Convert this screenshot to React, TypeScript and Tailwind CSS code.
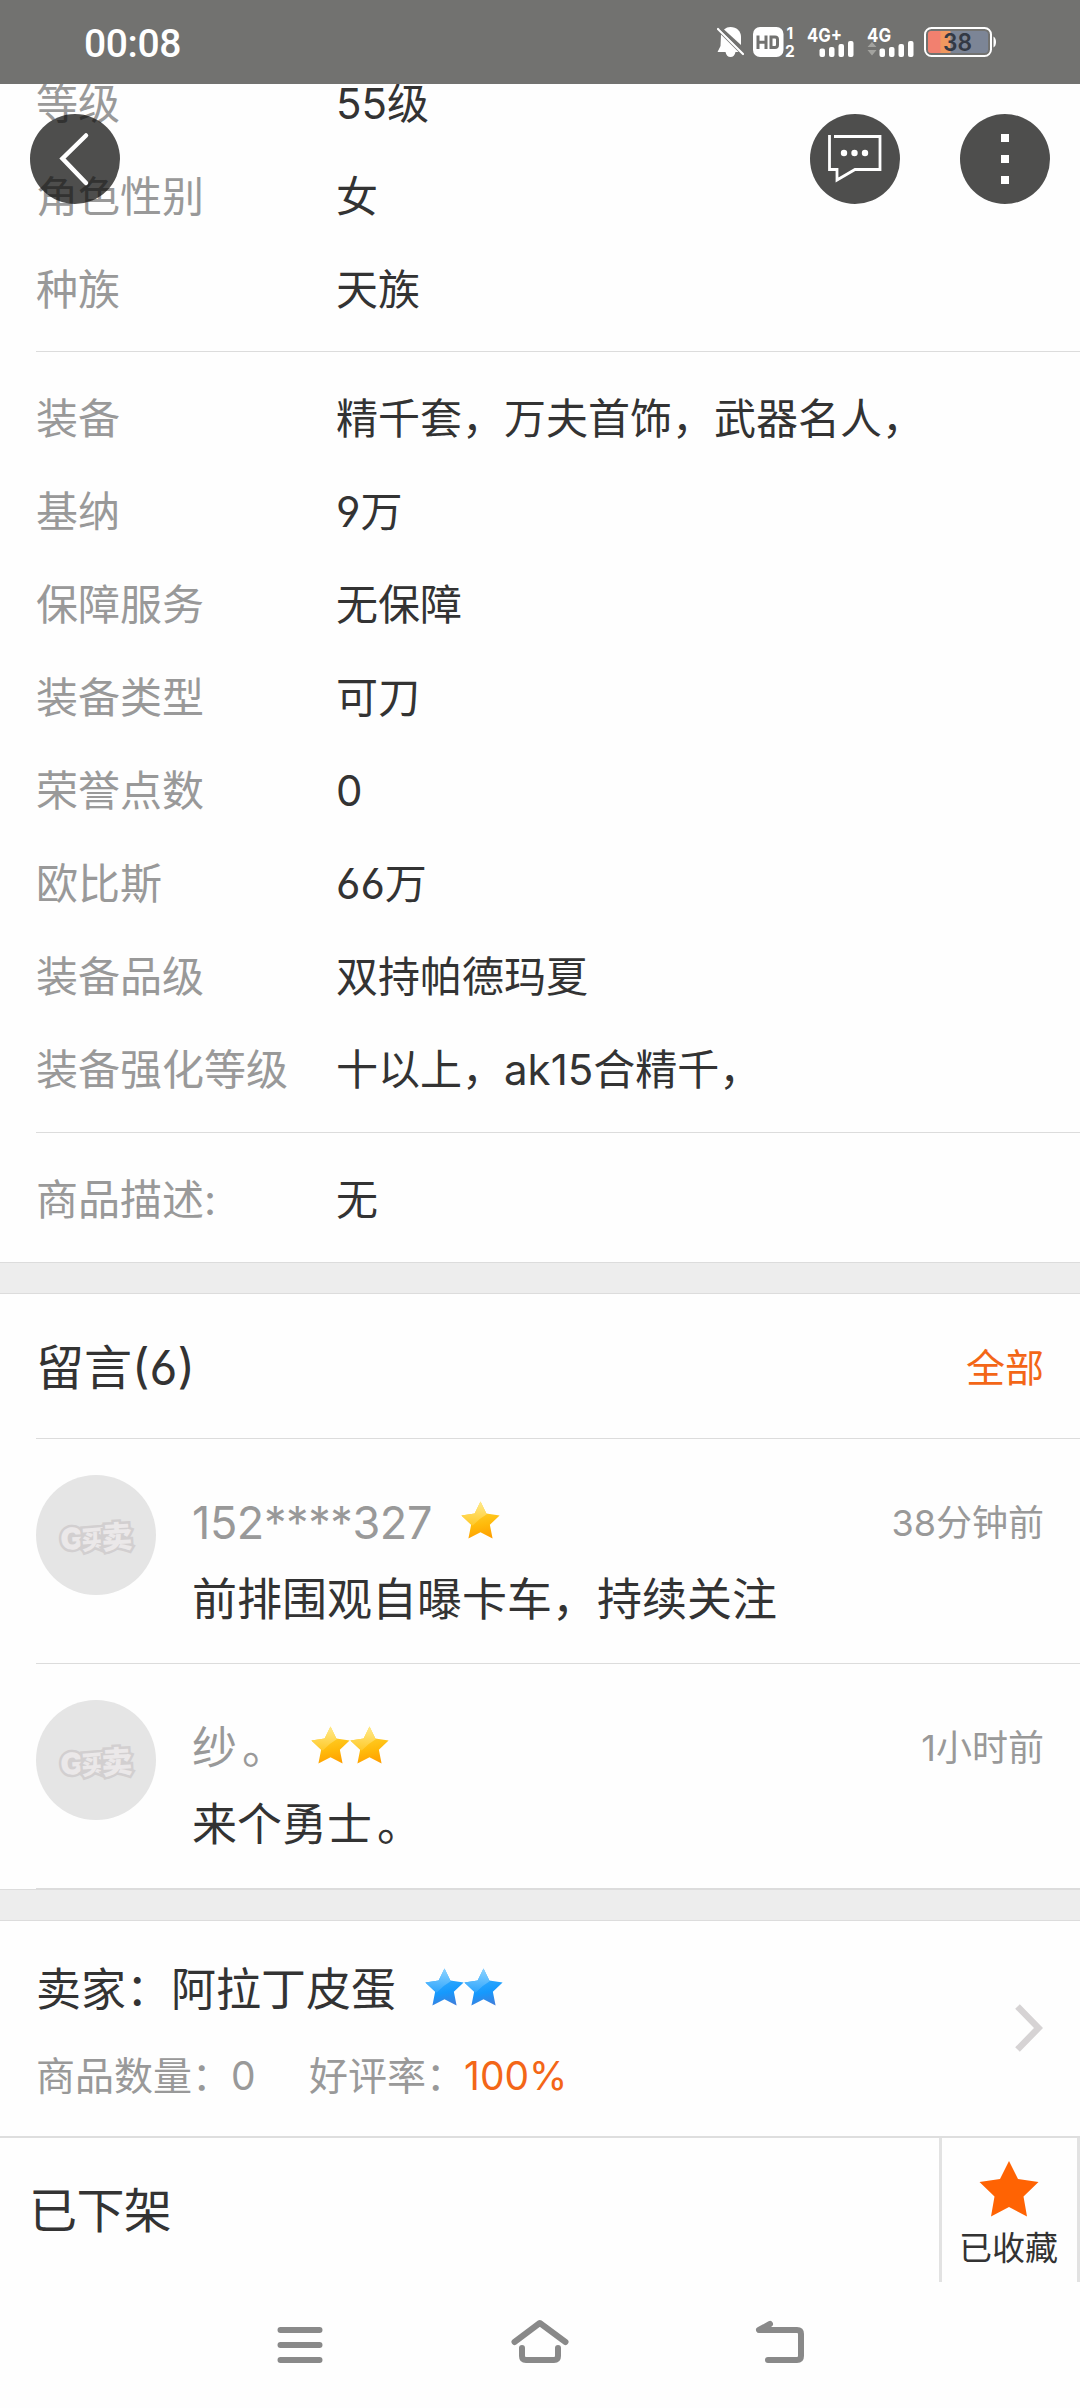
import type { ReactNode } from 'react';

const STAR = 'M50 1 L65 32 L99 37 L74 61 L81 96 L50 80 L19 96 L26 61 L1 37 L35 32 Z';

function Star({ tone }: { tone: 'gold' | 'blue' }) {
  const gold = tone === 'gold';
  return (
    <svg className="mb-[5px] h-[39px] w-[39px]" viewBox="0 0 100 100">
      <defs>
        <linearGradient id={`fill-${tone}`} x1="0.4" y1="0" x2="0.6" y2="1">
          <stop offset="0.2" stopColor={gold ? '#ffd22e' : '#35adff'} />
          <stop offset="0.65" stopColor={gold ? '#ffb90a' : '#1599fd'} />
          <stop offset="1" stopColor={gold ? '#ff9f00' : '#3f7fdc'} />
        </linearGradient>
        <linearGradient id={`shine-${tone}`} x1="0.5" y1="0" x2="0.4" y2="1">
          <stop offset="0" stopColor={gold ? '#ffe98a' : '#8ad2ff'} />
          <stop offset="1" stopColor={gold ? '#ffc928' : '#2ea5fd'} />
        </linearGradient>
      </defs>
      <path d={STAR} fill={`url(#fill-${tone})`} />
      <path d="M50 1 L65 32 L66 34 Q48 44 30 63 L26 60 L1 37 L35 32 Z" fill={`url(#shine-${tone})`} />
    </svg>
  );
}

function Row({ label, value }: { label: string; value: string }) {
  return (
    <div className="flex h-[93px] items-center pl-9 text-[42px] leading-[60px] whitespace-nowrap">
      <span className="w-[300px] text-[#999999]">{label}</span>
      <span className="text-[#333333]">{value}</span>
    </div>
  );
}

function Divider() {
  return <div className="ml-9 h-px bg-[#dcdcdc]" />;
}

function Avatar() {
  return (
    <div className="flex size-[120px] shrink-0 items-center justify-center rounded-full bg-[#e5e5e5]">
      <svg className="h-[46px] w-[80px] overflow-visible" viewBox="0 0 80 46">
        <g
          fill="#ebe8e9"
          stroke="#d2cfd0"
          strokeWidth="5"
          strokeLinejoin="miter"
          paintOrder="stroke"
          fontWeight="900"
          fontFamily="Inter, 'Noto Sans CJK SC', sans-serif"
        >
          <text x="5" y="38" fontSize="30" transform="rotate(-3 5 38)">G</text>
          <text x="26" y="38" fontSize="26" transform="rotate(-5 26 38)">买</text>
          <text x="46" y="37" fontSize="31" transform="rotate(-3 46 37)">卖</text>
        </g>
      </svg>
    </div>
  );
}

function Sentence({ text }: { text: string }) {
  if (!text.endsWith('。')) return <>{text}</>;
  return (
    <>
      {text.slice(0, -1)}
      <span className="pl-[5px]">。</span>
    </>
  );
}

function Comment({ name, stars, time, text, nameWidth }: { name: string; stars: number; time: string; text: string; nameWidth: string }) {
  return (
    <div className="flex h-[224px] px-9 pt-9">
      <Avatar />
      <div className="ml-9 flex grow flex-col pt-[14px]">
        <div className="flex h-[68px] items-center">
          <span className={`${nameWidth} text-[45px] leading-[68px] whitespace-nowrap text-[#999999]`}><Sentence text={name} /></span>
          <span className="flex">
            {Array.from({ length: stars }, (_, i) => (
              <Star key={i} tone="gold" />
            ))}
          </span>
          <span className="ml-auto text-[36px] leading-[54px] whitespace-nowrap text-[#999999]">{time}</span>
        </div>
        <p className="mt-[9px] text-[45px] leading-[68px] text-[#333333]"><Sentence text={text} /></p>
      </div>
    </div>
  );
}

function Signal({ label, arrows }: { label: string; arrows?: boolean }) {
  return (
    <svg className="h-[30px] w-[47px] overflow-visible" viewBox="0 0 47 30" fill="#fff">
      <text x="0" y="14.5" fontSize="19" fontWeight="700" fontFamily="Inter, sans-serif" textLength={label.length > 2 ? 35 : 24} lengthAdjust="spacingAndGlyphs">
        {label}
      </text>
      {arrows && <path d="M0.5 20 L5 15 L9.500 20 Z M0.500 23 L9.500 23 L5 28.500 Z" fill="#a3a39f" />}
      <rect x="12.500" y="21.500" width="5.500" height="8.500" rx="2" />
      <rect x="22" y="20" width="5.500" height="10" rx="2" />
      <rect x="31.500" y="17" width="5.500" height="13" rx="2" />
      <rect x="41" y="14" width="5.500" height="16" rx="2" />
    </svg>
  );
}

function StatusBar() {
  return (
    <header className="relative z-10 flex h-[84px] shrink-0 bg-[#727270] pr-[84px] pl-[84px] text-white">
      <span className="pt-[20px] font-[Roboto] text-[39px] leading-[48px] font-medium tracking-[-0.4px]">00:08</span>
      <div className="ml-auto flex pt-[27px]">
        <svg className="h-[30px] w-[27px]" viewBox="0 0 27 30" fill="#fff">
          <path d="M13.500 0 C19.500 0 24 4 24 10 V18 L7 2.500 C9 0.800 11 0 13.500 0 Z" />
          <path d="M4 7.500 L21.500 25 H18.500 Q17.500 30 13.500 30 Q9.500 30 8.500 25 H0.500 L3.500 19 Z" />
          <path d="M1 2 L26 27" stroke="#fff" strokeWidth="2.200" strokeLinecap="round" />
          <path d="M3 1.500 L27 24.500" stroke="#727270" strokeWidth="1.400" />
        </svg>
        <svg className="ml-[9px] h-[30px] w-[43px] overflow-visible" viewBox="0 0 43 30" fill="#fff">
          <rect width="30.500" height="30" rx="7" />
          <path d="M5 8.500 V22 M13 8.500 V22 M5 15.200 H13 M18 10 V20.500 H22 Q24.500 20.500 24.500 18 V12.500 Q24.500 10 22 10 Z" stroke="#727270" strokeWidth="3" fill="none" />
          <text x="33.500" y="11.500" fontSize="15.500" fontWeight="700" fontFamily="Inter, sans-serif">1</text>
          <text x="32" y="29.500" fontSize="15.500" fontWeight="700" fontFamily="Inter, sans-serif">2</text>
        </svg>
        <div className="ml-[11px] flex gap-[13px]">
          <Signal label="4G+" />
          <Signal label="4G" arrows />
        </div>
        <svg className="ml-[10px] h-[30px] w-[72px]" viewBox="0 0 72 30">
          <rect x="1" y="1" width="66" height="28" rx="6.500" fill="none" stroke="#fff" strokeWidth="2" />
          <path d="M69.500 9.500 Q72 11 72 15 Q72 19 69.500 20.500 Z" fill="#fff" />
          <rect x="4" y="4" width="60" height="22" rx="3.500" fill="#7c8596" />
          <path d="M7 4 H17 V26 H7 Q4 26 4 23 V7 Q4 4 7 4 Z" fill="#f2806f" />
          <rect x="16.500" y="4" width="10" height="22" fill="#f0985f" />
          <text x="19" y="23.500" fontSize="24" fontWeight="600" fontFamily="Inter, sans-serif" fill="#333944" textLength="29" lengthAdjust="spacingAndGlyphs">38</text>
        </svg>
      </div>
    </header>
  );
}

function RoundButton({ children, label }: { children: ReactNode; label: string }) {
  return (
    <button aria-label={label} className="flex size-[90px] items-center justify-center rounded-full bg-[#0a0a08]/72">
      {children}
    </button>
  );
}

function FloatingActions() {
  return (
    <div className="absolute inset-x-0 top-[114px] z-20 flex items-center px-[30px]">
      <RoundButton label="back">
        <svg className="size-[90px]" viewBox="0 0 90 90" fill="none" stroke="#fff" strokeWidth="4.500">
          <path d="M56 21.500 L32.500 44.500 L56 69" strokeLinecap="round" />
        </svg>
      </RoundButton>
      <div className="ml-auto flex gap-[60px]">
        <RoundButton label="messages">
          <svg className="size-[90px]" viewBox="0 0 90 90" fill="none" stroke="#fff" strokeWidth="2.800">
            <path d="M19.500 21 V55.500 H27 V66 L45 55.500 H70 V22.500 H24" />
            <g fill="#fff" stroke="none">
              <circle cx="34" cy="39" r="3.200" />
              <circle cx="44.500" cy="39" r="3.200" />
              <circle cx="55" cy="39" r="3.200" />
            </g>
          </svg>
        </RoundButton>
        <RoundButton label="more">
          <span className="flex flex-col gap-[13px]">
            <i className="size-2 bg-white" />
            <i className="size-2 bg-white" />
            <i className="size-2 bg-white" />
          </span>
        </RoundButton>
      </div>
    </div>
  );
}

const basics = [
  ['等级', '55级'],
  ['角色性别', '女'],
  ['种族', '天族'],
];

const gear = [
  ['装备', '精千套，万夫首饰，武器名人，'],
  ['基纳', '9万'],
  ['保障服务', '无保障'],
  ['装备类型', '可刀'],
  ['荣誉点数', '0'],
  ['欧比斯', '66万'],
  ['装备品级', '双持帕德玛夏'],
  ['装备强化等级', '十以上，ak15合精千，'],
];

export default function App() {
  return (
    <div className="relative flex h-[2408px] w-[1080px] flex-col overflow-hidden bg-[#fefefe] font-[Inter,'Noto_Sans_CJK_SC',sans-serif] [font-feature-settings:'cv03','cv04']" lang="zh-CN">
      <StatusBar />
      <FloatingActions />

      <main className="-mt-[27px]">
        <section className="pb-[15px]">
          {basics.map(([l, v]) => <Row key={l} label={l} value={v} />)}
        </section>
        <Divider />
        <section className="pt-[20px] pb-[16px]">
          {gear.map(([l, v]) => <Row key={l} label={l} value={v} />)}
        </section>
        <Divider />
        <section className="pt-[20px] pb-[16px]">
          <Row label="商品描述:" value="无" />
        </section>

        <div className="h-8 border-y border-[#dcdcdc] bg-[#ededed]" />

        <section>
          <div className="flex h-[144px] items-center justify-between px-9 pt-[3px]">
            <h2 className="text-[48px] leading-[72px] text-[#333333]">留言(6)</h2>
            <span className="text-[39px] leading-[58px] text-[#f36617]">全部</span>
          </div>
          <Divider />
          <Comment name="152****327" stars={1} time="38分钟前" text="前排围观自曝卡车，持续关注" nameWidth="w-[269px] tracking-[-0.4px]" />
          <Divider />
          <Comment name="纱。" stars={2} time="1小时前" text="来个勇士。" nameWidth="w-[119px]" />
          <Divider />
        </section>

        <div className="h-[32px] border-y border-[#dcdcdc] bg-[#ededed]" />

        <section className="flex h-[215px] items-center pt-[3px] pr-[37px] pl-9">
          <div className="flex grow flex-col">
            <div className="flex h-[68px] items-center text-[45px] leading-[68px] text-[#333333]">
              <span className="w-[389px] whitespace-nowrap">卖家：阿拉丁皮蛋</span>
              <Star tone="blue" />
              <Star tone="blue" />
            </div>
            <div className="mt-[23px] flex h-[58px] items-center text-[39px] leading-[58px] whitespace-nowrap text-[#999999]">
              <span className="w-[273px]">商品数量：0</span>
              <span className="-mr-px">好评率：</span>
              <span className="text-[#f36617]">100%</span>
            </div>
          </div>
          <svg className="mb-[4px] h-[50px] w-[28px]" viewBox="0 0 28 50" fill="none" stroke="#d6d3d4" strokeWidth="6.500">
            <path d="M2.500 3.500 L23.500 25 L2.500 46.500" />
          </svg>
        </section>
      </main>

      <div className="flex h-[146px] shrink-0 border-t-2 border-[#dedede] text-[#333333]">
        <div className="flex grow items-center pt-[2px] pl-[29px] text-[48px] leading-[72px] tracking-[-0.6px]">已下架</div>
        <div className="flex w-[141px] flex-col items-center border-x-3 border-[#e2e2e2] pt-[23px] pr-[2px]">
          <svg className="h-[56px] w-[60px]" viewBox="0 0 60 56" fill="#ff6303">
            <path d="M30 0 L39 18 L59.500 21 L44.500 35.500 L48 55.500 L30 46 L12 55.500 L15.500 35.500 L0.500 21 L21 18 Z" />
          </svg>
          <span className="mt-[7px] text-[33px] leading-[48px]">已收藏</span>
        </div>
      </div>

      <nav className="flex grow justify-center gap-[180px] pt-[32px]">
        <svg className="h-[60px] w-[60px]" viewBox="0 0 60 60" stroke="#898989" strokeWidth="6" strokeLinecap="round">
          <path d="M10.500 16 H49.500 M10.500 31 H49.500 M10.500 46 H49.500" />
        </svg>
        <svg className="h-[60px] w-[60px]" viewBox="0 0 60 60" fill="none" stroke="#898989" strokeWidth="6" strokeLinecap="round" strokeLinejoin="round">
          <path d="M4.500 28 L29.800 9 L55.500 28 M12 34 V42 Q12 46 16 46 H44 Q48 46 48 42 V34" />
        </svg>
        <svg className="h-[60px] w-[60px]" viewBox="0 0 60 60" fill="none" stroke="#898989" strokeWidth="6" strokeLinecap="round" strokeLinejoin="round">
          <path d="M20 10 L9 16 H47 Q51 16 51 20 V42 Q51 46 47 46 H18" />
        </svg>
      </nav>
    </div>
  );
}
